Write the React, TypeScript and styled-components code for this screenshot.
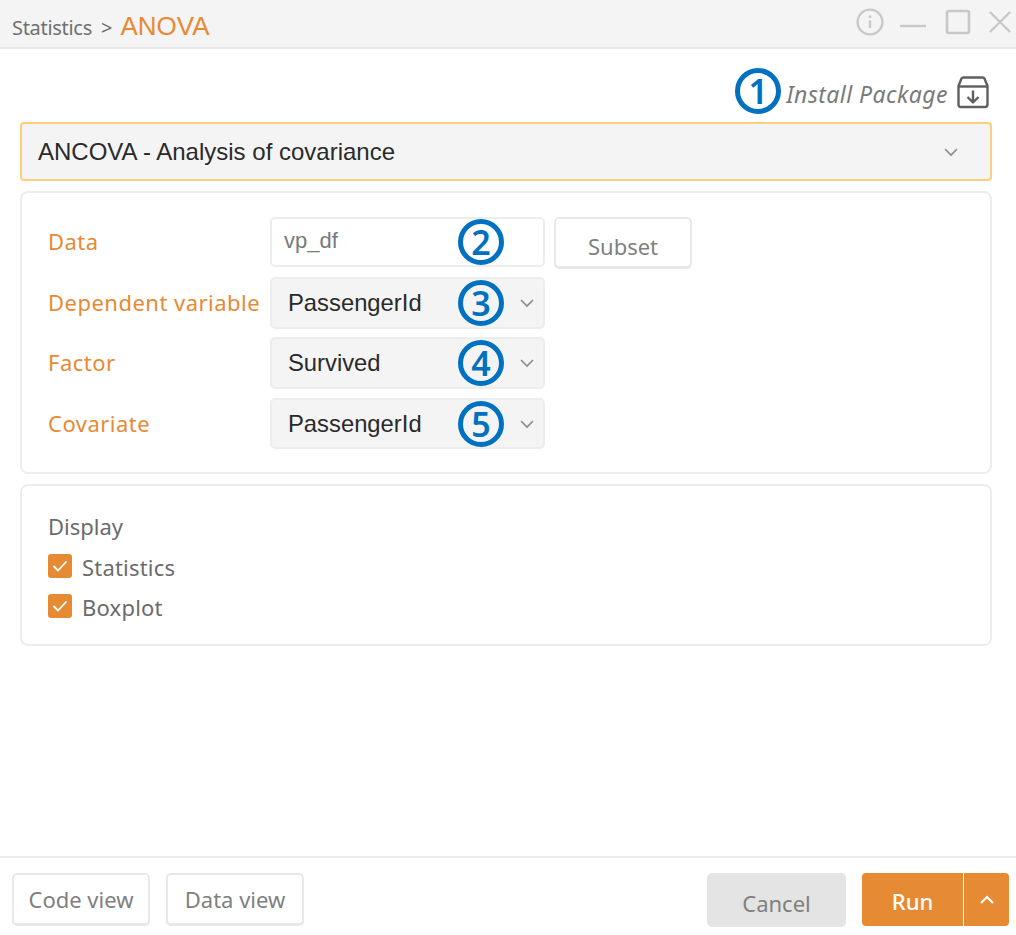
import React from "react";
import styled, { createGlobalStyle } from "styled-components";

const ORANGE = "#e68a33";
const BLUE = "#0070c0";
const UI_FONT = '"Noto Sans", "Noto Sans CJK KR", sans-serif';
const VALUE_FONT = '"Liberation Sans", Arial, sans-serif';

const GlobalStyle = createGlobalStyle`
  html, body {
    margin: 0;
    padding: 0;
    background: #fff;
  }
  * {
    box-sizing: border-box;
  }
`;

const Page = styled.div`
  width: 1016px;
  height: 935px;
  display: flex;
  flex-direction: column;
  font-family: ${UI_FONT};
  color: #6b6b6b;
`;

const TitleBar = styled.header`
  height: 49px;
  flex: none;
  display: flex;
  align-items: center;
  justify-content: space-between;
  padding: 5px 16px 0 12px;
  background: #f4f4f4;
  border-bottom: 2px solid #e8e8e8;
`;

const Crumbs = styled.div`
  display: flex;
  align-items: baseline;
`;

const Crumb = styled.span`
  font-size: 20px;
  letter-spacing: -0.3px;
  color: #707070;
`;

const CrumbArrow = styled.span`
  font-size: 20px;
  margin: 0 8px 0 9px;
  color: #707070;
`;

const CrumbTitle = styled.span`
  font-family: ${VALUE_FONT};
  font-size: 26px;
  color: ${ORANGE};
`;

const WindowButtons = styled.div`
  display: flex;
  align-items: center;
  gap: 17px;
  margin-top: -9px;
  margin-right: -12px;
`;

const InfoIcon = styled.svg`
  margin-right: -2px;
`;

const Main = styled.main`
  flex: 1;
  display: flex;
  flex-direction: column;
  padding: 19px 24px 0 20px;
`;

const InstallRow = styled.div`
  height: 54px;
  display: flex;
  align-items: flex-start;
  justify-content: flex-end;
  margin-right: 2px;
`;

const Marker = styled.span`
  width: 46px;
  height: 46px;
  border: 5px solid ${BLUE};
  border-radius: 50%;
  display: flex;
  align-items: center;
  justify-content: center;
  font-family: ${UI_FONT};
  font-size: 34px;
  font-weight: 600;
  line-height: 1;
  color: ${BLUE};
`;

const OverMarker = styled(Marker)`
  position: absolute;
  top: 50%;
  left: 186px;
  transform: translateY(-50%);
`;

const InstallText = styled.span`
  font-size: 23px;
  font-style: italic;
  letter-spacing: 0.45px;
  color: #7a7a7a;
  margin: 10px 8px 0 5px;
`;

const InstallIcon = styled.svg`
  width: 34px;
  height: 34px;
  margin-top: 7px;
`;

const AlgoSelect = styled.div`
  height: 59px;
  flex: none;
  display: flex;
  align-items: center;
  justify-content: space-between;
  padding: 0 31px 0 16px;
  border: 2px solid #fbcf7c;
  border-radius: 4px;
  background: #f4f4f4;
  font-family: ${VALUE_FONT};
  font-size: 24px;
  color: #2a2a2a;
`;

const Panel = styled.section<{ $height: number }>`
  height: ${(p) => p.$height}px;
  flex: none;
  margin-top: 10px;
  padding: 24px 26px;
  border: 2px solid #ededed;
  border-radius: 8px;
  background: #fff;
`;

const FormRow = styled.div<{ $gap?: number; $height: number }>`
  height: ${(p) => p.$height}px;
  display: flex;
  align-items: flex-start;
  margin-top: ${(p) => p.$gap ?? 0}px;
`;

const FieldLabel = styled.label`
  width: 222px;
  flex: none;
  align-self: center;
  padding-bottom: 2px;
  font-size: 22px;
  letter-spacing: 0.48px;
  white-space: nowrap;
  color: ${ORANGE};
`;

const InputBox = styled.div`
  position: relative;
  width: 275px;
  height: 50px;
  display: flex;
  align-items: center;
  padding: 0 0 3px 12px;
  border: 2px solid #ededed;
  border-radius: 5px;
  font-family: ${VALUE_FONT};
  font-size: 22px;
  color: #7a7a7a;
`;

const SelectBox = styled.div`
  position: relative;
  width: 275px;
  height: 100%;
  display: flex;
  align-items: center;
  justify-content: space-between;
  padding: 0 8px 0 16px;
  border: 2px solid #ededed;
  border-radius: 5px;
  background: #f4f4f4;
  font-family: ${VALUE_FONT};
  font-size: 23.8px;
  color: #2a2a2a;
`;

const Button = styled.button`
  font-family: ${UI_FONT};
  font-size: 22px;
  color: #808080;
  background: #fff;
  border: 2px solid #e8e8e8;
  border-bottom-width: 3px;
  border-radius: 5px;
  padding: 0;
`;

const SubsetButton = styled(Button)`
  width: 138px;
  height: 52px;
  flex: none;
  margin-left: 9px;
  padding-top: 7px;
`;

const DisplayTitle = styled.div`
  margin-top: 1px;
  font-size: 22px;
  line-height: 30px;
  color: #6b6b6b;
`;

const CheckRow = styled.label<{ $top: number }>`
  display: flex;
  align-items: center;
  gap: 10px;
  height: 24px;
  margin-top: ${(p) => p.$top}px;
  font-size: 22px;
  letter-spacing: 0.2px;
  color: #6b6b6b;
`;

const CheckText = styled.span`
  padding-top: 2px;
`;

const CheckBox = styled.span`
  width: 24px;
  height: 24px;
  display: flex;
  align-items: center;
  justify-content: center;
  border-radius: 3px;
  background: ${ORANGE};
`;

const Footer = styled.footer`
  height: 79px;
  flex: none;
  display: flex;
  align-items: flex-start;
  justify-content: space-between;
  padding: 15px 7px 0 12px;
  border-top: 2px solid #ebebeb;
`;

const FooterGroup = styled.div<{ $gap: number }>`
  display: flex;
  gap: ${(p) => p.$gap}px;
`;

const ViewButton = styled(Button)`
  width: 138px;
  height: 53px;
`;

const CancelButton = styled(Button)`
  width: 139px;
  height: 54px;
  padding-top: 5px;
  border: none;
  background: #e4e4e4;
`;

const RunGroup = styled.div`
  width: 147px;
  height: 53px;
  display: flex;
  border-radius: 4px;
  overflow: hidden;
  background: ${ORANGE};
`;

const RunButton = styled.button`
  width: 102px;
  border: none;
  border-right: 1px solid #fff;
  padding: 2px 0 0;
  background: transparent;
  font-family: ${UI_FONT};
  font-size: 22px;
  font-weight: 500;
  color: #fff;
`;

const RunMore = styled.button`
  flex: 1;
  display: flex;
  align-items: center;
  justify-content: center;
  border: none;
  padding: 0;
  background: transparent;
`;

const Chevron = ({ color = "#8a8a8a", up = false, width = 1.6 }: { color?: string; up?: boolean; width?: number }) => (
  <svg width="16" height="10" viewBox="0 0 16 10" fill="none">
    <path
      d={up ? "M2 8 L8 2 L14 8" : "M2 2 L8 8 L14 2"}
      stroke={color}
      strokeWidth={width}
    />
  </svg>
);

const Check = () => (
  <svg width="16" height="12" viewBox="0 0 16 12" fill="none" stroke="#fff" strokeWidth="1.8">
    <path d="M1.5 6 L6 10.5 L14.5 1.5" />
  </svg>
);

export default function App() {
  return (
    <Page>
      <GlobalStyle />
      <TitleBar>
        <Crumbs>
          <Crumb>Statistics</Crumb>
          <CrumbArrow>&gt;</CrumbArrow>
          <CrumbTitle>ANOVA</CrumbTitle>
        </Crumbs>
        <WindowButtons>
          <InfoIcon width="30" height="30" viewBox="0 0 30 30" fill="none" stroke="#c8c8c8" strokeWidth="2.4">
            <circle cx="15" cy="15" r="12.4" />
            <path d="M15 13.5 V21 M15 8.5 V11" />
          </InfoIcon>
          <svg width="28" height="30" viewBox="0 0 28 30" fill="none" stroke="#c8c8c8" strokeWidth="2.4">
            <path d="M0 19 H26" />
          </svg>
          <svg width="26" height="26" viewBox="0 0 26 26" fill="none" stroke="#c8c8c8" strokeWidth="2.6">
            <rect x="2" y="2" width="22" height="22" rx="2" />
          </svg>
          <svg width="24" height="24" viewBox="0 0 24 24" fill="none" stroke="#c8c8c8" strokeWidth="2.4">
            <path d="M2 2 L22 22 M22 2 L2 22" />
          </svg>
        </WindowButtons>
      </TitleBar>

      <Main>
        <InstallRow>
          <Marker>1</Marker>
          <InstallText>Install Package</InstallText>
          <InstallIcon viewBox="0 0 34 34" fill="none" stroke="#5f5f5f" strokeWidth="2.4" strokeLinejoin="round">
            <path d="M2.5 11 L5.5 3.5 Q6 2.5 7.5 2.5 H26.5 Q28 2.5 28.5 3.5 L31.5 11 V29.5 Q31.5 32 29 32 H5 Q2.5 32 2.5 29.5 Z" />
            <path d="M2.5 11.5 H31.5" />
            <path d="M17 15.5 V27.5 M11.5 22 L17 27.5 L22.5 22" />
          </InstallIcon>
        </InstallRow>

        <AlgoSelect>
          ANCOVA - Analysis of covariance
          <Chevron />
        </AlgoSelect>

        <Panel $height={283}>
          <FormRow $height={50}>
            <FieldLabel>Data</FieldLabel>
            <InputBox>
              vp_df
              <OverMarker>2</OverMarker>
            </InputBox>
            <SubsetButton>Subset</SubsetButton>
          </FormRow>
          <FormRow $gap={10} $height={52}>
            <FieldLabel>Dependent variable</FieldLabel>
            <SelectBox>
              PassengerId
              <OverMarker>3</OverMarker>
              <Chevron />
            </SelectBox>
          </FormRow>
          <FormRow $gap={8} $height={52}>
            <FieldLabel>Factor</FieldLabel>
            <SelectBox>
              Survived
              <OverMarker>4</OverMarker>
              <Chevron />
            </SelectBox>
          </FormRow>
          <FormRow $gap={9} $height={51}>
            <FieldLabel>Covariate</FieldLabel>
            <SelectBox>
              PassengerId
              <OverMarker>5</OverMarker>
              <Chevron />
            </SelectBox>
          </FormRow>
        </Panel>

        <Panel $height={162}>
          <DisplayTitle>Display</DisplayTitle>
          <CheckRow $top={13}>
            <CheckBox>
              <Check />
            </CheckBox>
            <CheckText>Statistics</CheckText>
          </CheckRow>
          <CheckRow $top={16}>
            <CheckBox>
              <Check />
            </CheckBox>
            <CheckText>Boxplot</CheckText>
          </CheckRow>
        </Panel>
      </Main>

      <Footer>
        <FooterGroup $gap={16}>
          <ViewButton>Code view</ViewButton>
          <ViewButton>Data view</ViewButton>
        </FooterGroup>
        <FooterGroup $gap={16}>
          <CancelButton>Cancel</CancelButton>
          <RunGroup>
            <RunButton>Run</RunButton>
            <RunMore>
              <Chevron color="#fff" up width={2.2} />
            </RunMore>
          </RunGroup>
        </FooterGroup>
      </Footer>
    </Page>
  );
}
